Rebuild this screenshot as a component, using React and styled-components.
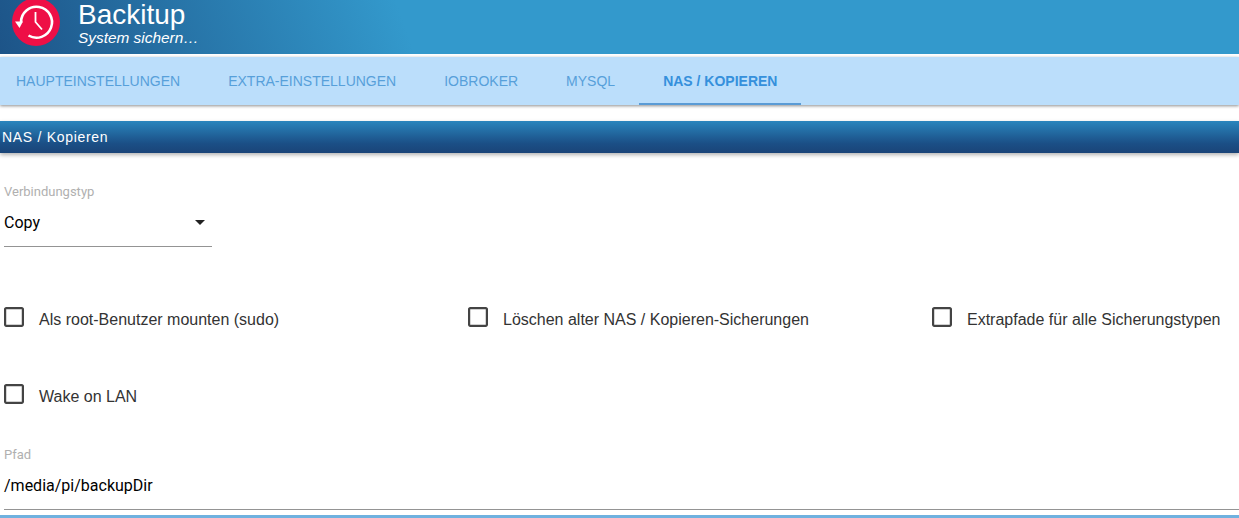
import React from "react";
import styled, { createGlobalStyle } from "styled-components";

const tabs = ["Haupteinstellungen", "Extra-Einstellungen", "ioBroker", "MySQL", "NAS / Kopieren"];

const options = [
  "Als root-Benutzer mounten (sudo)",
  "Löschen alter NAS / Kopieren-Sicherungen",
  "Extrapfade für alle Sicherungstypen",
  "Wake on LAN",
];

const App = () => {
  return (
    <Page>
      <GlobalStyle />
      <Header>
        <Logo>
          <svg width="48" height="48" viewBox="0 0 48 48" fill="none" stroke="#fff">
            <path d="M9 24.5 A15.5 15.5 0 1 1 16.5 37.5" strokeWidth="2.6" />
            <path d="M5.5 23.5 H13.5 L10 30 Z" fill="#fff" stroke="none" transform="translate(-2.5 0)" />
            <path d="M23.5 14 V24 L30 31.5" strokeWidth="1.8" />
          </svg>
        </Logo>
        <HeaderText>
          <AppTitle>Backitup</AppTitle>
          <AppSubtitle>System sichern…</AppSubtitle>
        </HeaderText>
      </Header>
      <TabBar>
        {tabs.map((tab, i) => (
          <Tab key={tab} $active={i === tabs.length - 1}>
            {tab}
          </Tab>
        ))}
      </TabBar>
      <SectionBar>NAS / Kopieren</SectionBar>
      <Form>
        <SelectField>
          <FieldLabel>Verbindungstyp</FieldLabel>
          <SelectValue>
            Copy
            <Caret />
          </SelectValue>
        </SelectField>
        <CheckGrid>
          {options.map((option) => (
            <CheckRow key={option}>
              <CheckIcon viewBox="3 3 18 18">
                <path d="M19 5v14H5V5h14m0-2H5c-1.1 0-2 .9-2 2v14c0 1.1.9 2 2 2h14c1.1 0 2-.9 2-2V5c0-1.1-.9-2-2-2z" />
              </CheckIcon>
              <CheckLabel>{option}</CheckLabel>
            </CheckRow>
          ))}
        </CheckGrid>
        <PathField>
          <FieldLabel>Pfad</FieldLabel>
          <PathValue>/media/pi/backupDir</PathValue>
        </PathField>
      </Form>
      <BottomStrip />
    </Page>
  );
};

const GlobalStyle = createGlobalStyle`
  html, body {
    margin: 0;
    padding: 0;
    background: #fff;
    overflow: hidden;
  }
`;

const Page = styled.div`
  width: 1239px;
  height: 518px;
  overflow: hidden;
  font-family: "Liberation Sans", Arial, sans-serif;
  background: #fff;
`;

const Header = styled.header`
  height: 54px;
  overflow: hidden;
  display: flex;
  align-items: flex-start;
  background: linear-gradient(70deg, #1d5488 0%, #3399cc 33%);
`;

const Logo = styled.div`
  width: 48px;
  height: 48px;
  margin: -2px 0 0 12px;
  flex-shrink: 0;
  border-radius: 50%;
  background: #ee0f46;
`;

const HeaderText = styled.div`
  margin-left: 18px;
  color: #fff;
`;

const AppTitle = styled.div`
  font-size: 28px;
  line-height: 30px;
`;

const AppSubtitle = styled.div`
  margin-top: -1px;
  font-size: 15.4px;
  line-height: 17px;
  font-style: italic;
`;

const TabBar = styled.nav`
  height: 48px;
  margin-top: 3px;
  display: flex;
  background: #bbdefb;
  box-shadow: 0 1px 3px rgba(0, 0, 0, 0.45);
`;

const Tab = styled.div`
  height: 48px;
  box-sizing: border-box;
  padding: 2px 24px 0;
  display: flex;
  align-items: center;
  font-size: 14px;
  text-transform: uppercase;
  font-weight: ${(p) => (p.$active ? 700 : 400)};
  color: ${(p) => (p.$active ? "#3590dc" : "#57a0da")};
  border-bottom: 2px solid ${(p) => (p.$active ? "#5a9bd5" : "transparent")};

  &:first-child {
    padding-left: 16px;
  }
`;

const SectionBar = styled.div`
  height: 32px;
  margin-top: 16px;
  padding-left: 2px;
  display: flex;
  align-items: center;
  font-size: 14px;
  letter-spacing: 0.7px;
  color: #fff;
  background: linear-gradient(to bottom, #2a85bd 0%, #1b4f86 70%, #1a4478 100%);
  box-shadow: 0 2px 4px rgba(0, 0, 0, 0.3);
`;

const Form = styled.div`
  padding: 31px 0 0 4px;
  font-family: Roboto, "Liberation Sans", sans-serif;
`;

const SelectField = styled.div`
  width: 208px;
  height: 63px;
  box-sizing: border-box;
  border-bottom: 1px solid #949494;
`;

const FieldLabel = styled.div`
  font-size: 13px;
  line-height: 15px;
  color: #b0b0b0;
`;

const SelectValue = styled.div`
  margin-top: 14px;
  display: flex;
  align-items: center;
  justify-content: space-between;
  padding-right: 7px;
  font-size: 16px;
  line-height: 19px;
  color: #000;
`;

const Caret = styled.span`
  width: 0;
  height: 0;
  border-left: 5px solid transparent;
  border-right: 5px solid transparent;
  border-top: 5px solid #222;
`;

const CheckGrid = styled.div`
  margin-top: 60px;
  display: grid;
  grid-template-columns: repeat(3, 464px);
  row-gap: 57px;
`;

const CheckRow = styled.div`
  height: 20px;
  display: flex;
  align-items: flex-start;
`;

const CheckIcon = styled.svg`
  width: 20px;
  height: 20px;
  flex-shrink: 0;
  fill: #444;
`;

const CheckLabel = styled.span`
  margin: 3px 0 0 15px;
  font-family: "Liberation Sans", Arial, sans-serif;
  font-size: 16px;
  line-height: 20px;
  white-space: nowrap;
  color: #333;
`;

const PathField = styled.div`
  margin-top: 43px;
  height: 63px;
  box-sizing: border-box;
  border-bottom: 1px solid #949494;
`;

const PathValue = styled.div`
  margin-top: 14px;
  font-size: 16px;
  line-height: 19px;
  color: #000;
`;

const BottomStrip = styled.div`
  height: 3px;
  margin-top: 5px;
  background: #6fb1df;
`;

export default App;
